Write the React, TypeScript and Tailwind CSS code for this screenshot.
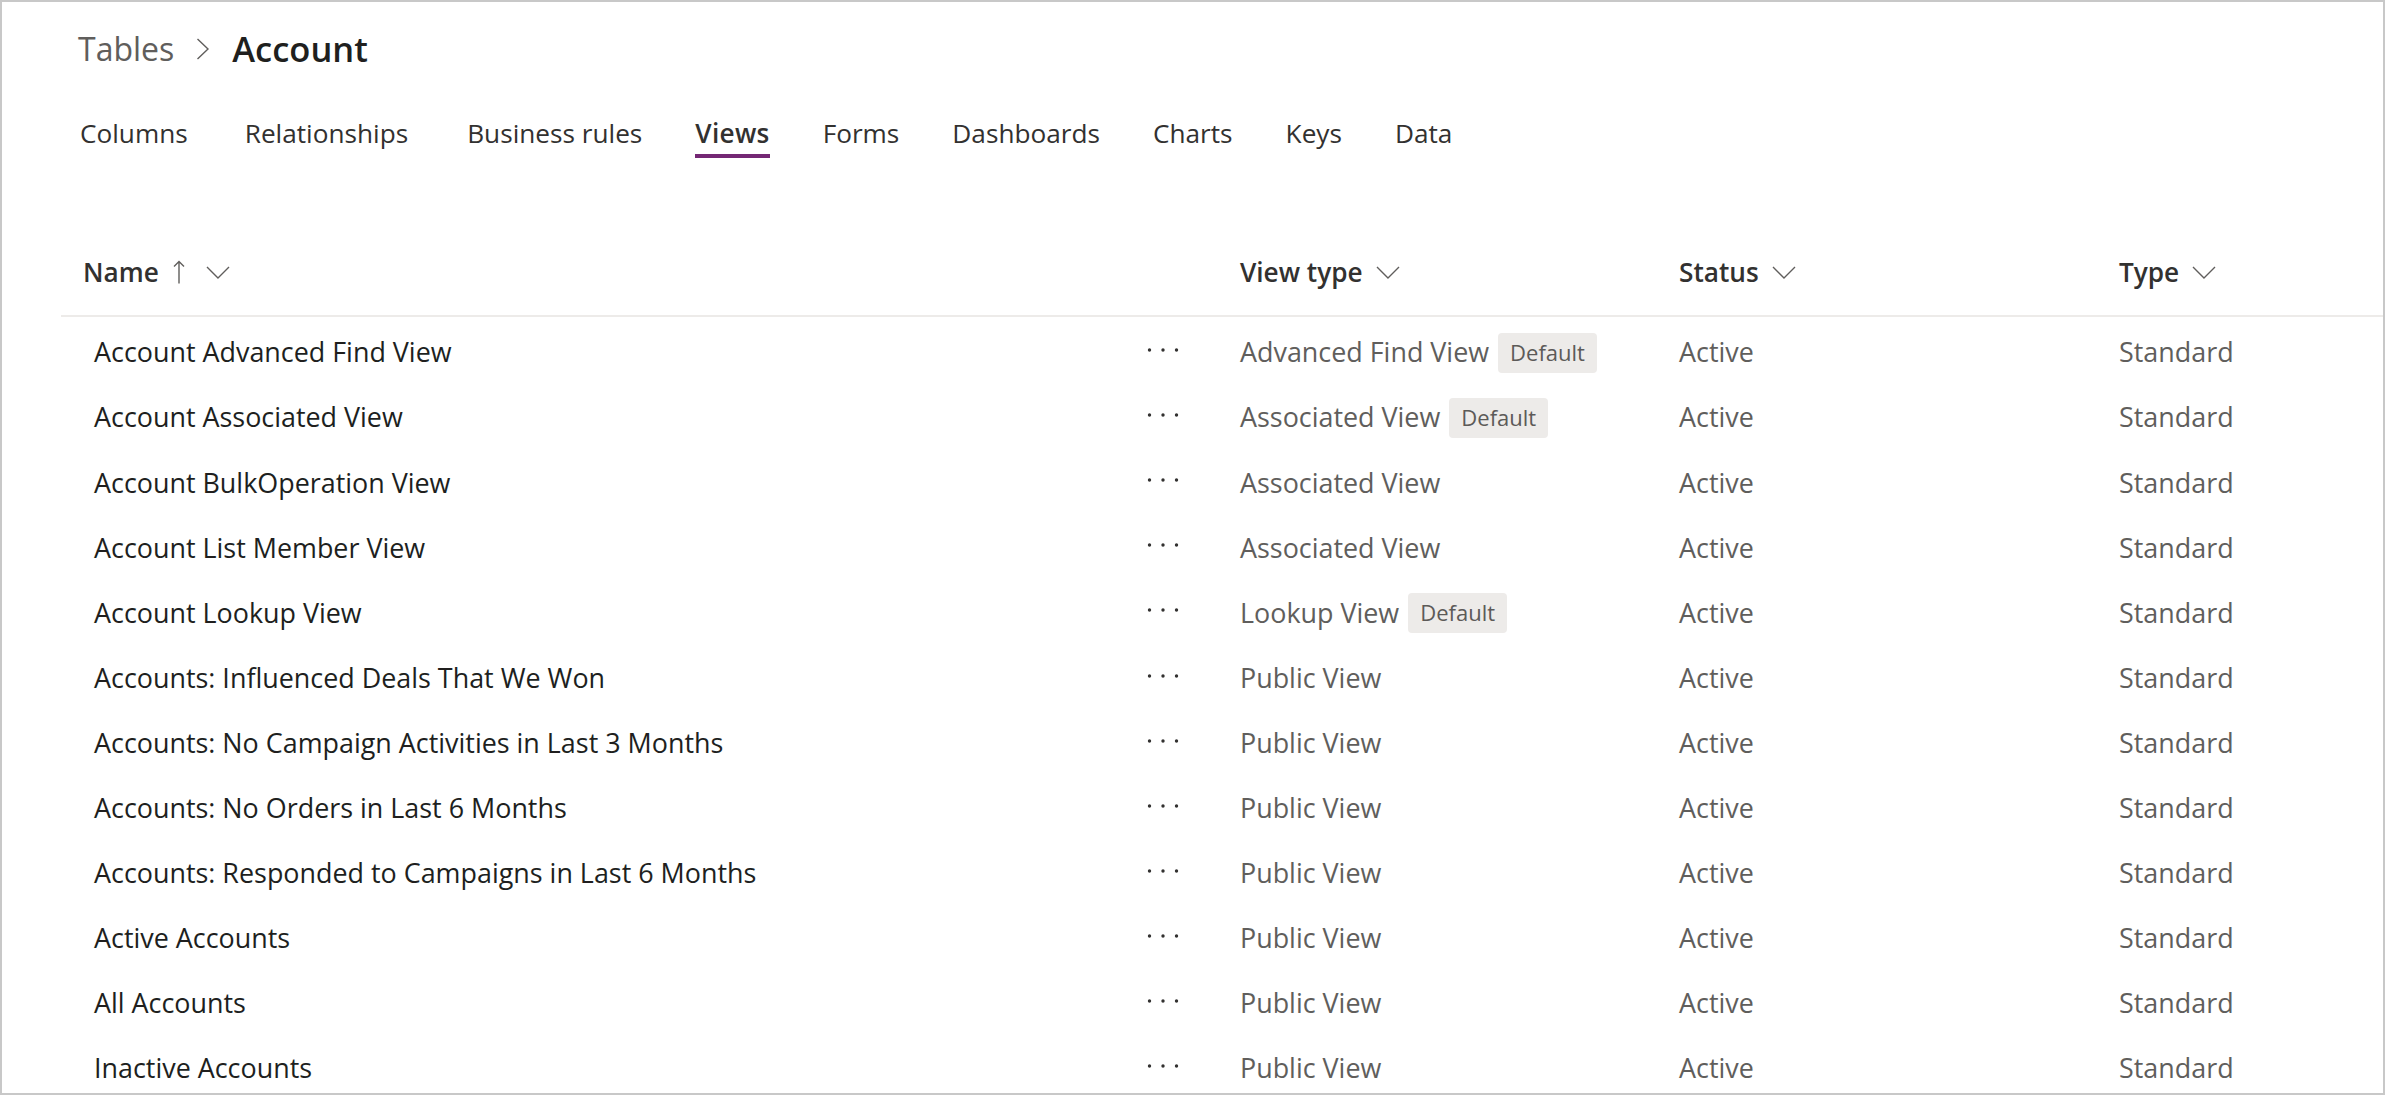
import React from 'react';

type ViewRow = {
  name: string;
  viewType: string;
  isDefault?: boolean;
};

const tabs = [
  'Columns',
  'Relationships',
  'Business rules',
  'Views',
  'Forms',
  'Dashboards',
  'Charts',
  'Keys',
  'Data',
];

const rows: ViewRow[] = [
  { name: 'Account Advanced Find View', viewType: 'Advanced Find View', isDefault: true },
  { name: 'Account Associated View', viewType: 'Associated View', isDefault: true },
  { name: 'Account BulkOperation View', viewType: 'Associated View' },
  { name: 'Account List Member View', viewType: 'Associated View' },
  { name: 'Account Lookup View', viewType: 'Lookup View', isDefault: true },
  { name: 'Accounts: Influenced Deals That We Won', viewType: 'Public View' },
  { name: 'Accounts: No Campaign Activities in Last 3 Months', viewType: 'Public View' },
  { name: 'Accounts: No Orders in Last 6 Months', viewType: 'Public View' },
  { name: 'Accounts: Responded to Campaigns in Last 6 Months', viewType: 'Public View' },
  { name: 'Active Accounts', viewType: 'Public View' },
  { name: 'All Accounts', viewType: 'Public View' },
  { name: 'Inactive Accounts', viewType: 'Public View' },
];

function ChevronDown() {
  return (
    <svg width="24" height="13" viewBox="0 0 24 13" fill="none" className="shrink-0">
      <path d="M1 1L12 12L23 1" stroke="#605e5c" strokeWidth="1.4" />
    </svg>
  );
}

function ArrowUp() {
  return (
    <svg width="12" height="24" viewBox="0 0 12 24" fill="none" className="shrink-0">
      <path d="M6 1.5V23.5M1 6.5L6 1.5L11 6.5" stroke="#605e5c" strokeWidth="1.4" />
    </svg>
  );
}

function MoreDots() {
  return (
    <svg width="32" height="6" viewBox="0 0 32 6" className="mb-[5px]">
      <circle cx="2.5" cy="3" r="1.7" fill="#323130" />
      <circle cx="16" cy="3" r="1.7" fill="#323130" />
      <circle cx="29.5" cy="3" r="1.7" fill="#323130" />
    </svg>
  );
}

function HeaderCell({ label }: { label: string }) {
  return (
    <div className="flex items-center">
      <span>{label}</span>
      <span className="ml-[13px]">
        <ChevronDown />
      </span>
    </div>
  );
}

export default function App() {
  return (
    <div className="h-[1095px] w-[2385px] overflow-hidden border-2 border-[#c8c8c8] bg-white font-['Open_Sans',sans-serif]">
      {/* Breadcrumb */}
      <div className="mt-[25px] flex h-[44px] items-center pl-[76px]">
        <span className="text-[32px] text-[#605e5c]">Tables</span>
        <span className="mx-[22px]">
          <svg width="14" height="22" viewBox="0 0 14 22" fill="none">
            <path d="M1.5 1L12 11L1.5 21" stroke="#605e5c" strokeWidth="1.4" />
          </svg>
        </span>
        <span className="text-[34.5px] font-semibold text-[#201f1e]">Account</span>
      </div>

      {/* Tabs */}
      <div className="mt-[44px] flex gap-[53px] pl-[78px] text-[26.2px] text-[#323130]">
        {tabs.map((tab) => (
          <div
            key={tab}
            className={`flex flex-col ${tab === 'Columns' ? 'mr-[4px]' : ''} ${tab === 'Relationships' ? 'mr-[6px]' : ''}`}
          >
            <span className={`leading-[36px] ${tab === 'Views' ? 'font-semibold tracking-[0.3px]' : ''}`}>
              {tab}
            </span>
            <div className={`mt-[3px] h-[4px] ${tab === 'Views' ? 'bg-[#742774]' : 'bg-transparent'}`} />
          </div>
        ))}
      </div>

      {/* Views table */}
      <div className="ml-[59px] mt-[70px]">
        <div className="grid h-[89px] grid-cols-[1086px_93px_439px_440px_1fr] items-center border-b-2 border-[#edebe9] pt-[2px] text-[26.2px] font-semibold text-[#323130]">
          <div className="flex items-center pl-[22px]">
            <span>Name</span>
            <span className="ml-[14px]">
              <ArrowUp />
            </span>
            <span className="ml-[21px]">
              <ChevronDown />
            </span>
          </div>
          <div />
          <HeaderCell label="View type" />
          <HeaderCell label="Status" />
          <HeaderCell label="Type" />
        </div>

        <div className="pt-[3px]">
          {rows.map((row) => (
            <div
              key={row.name}
              className="grid h-[65.1px] grid-cols-[1086px_93px_439px_440px_1fr] items-center text-[26.9px] text-[#605e5c]"
            >
              <div className="truncate pl-[33px] text-[#201f1e]">{row.name}</div>
              <div className="flex items-center">
                <MoreDots />
              </div>
              <div className="flex items-center">
                <span>{row.viewType}</span>
                {row.isDefault && (
                  <span className="ml-[9px] flex h-[40px] items-center rounded-[4px] bg-[#edebe9] px-[12px] text-[22px] text-[#5c5a58]">
                    Default
                  </span>
                )}
              </div>
              <div>Active</div>
              <div>Standard</div>
            </div>
          ))}
        </div>
      </div>
    </div>
  );
}
